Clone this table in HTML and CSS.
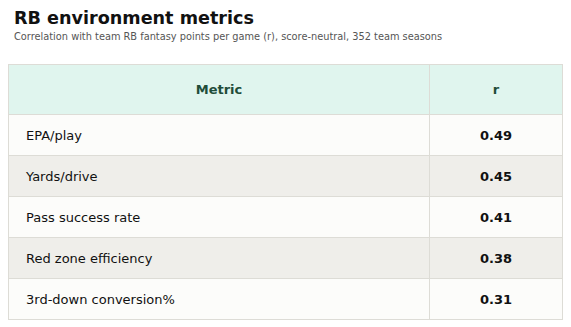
FILE: index.html
```html
<!DOCTYPE html>
<html>
<head>
<meta charset="utf-8">
<link rel="stylesheet" href="styles.css">
</head>
<body>
<div class="page">
  <h1 class="title">RB environment metrics</h1>
  <p class="subtitle">Correlation with team RB fantasy points per game (r), score-neutral, 352 team seasons</p>
  <table class="metrics">
    <thead>
      <tr><th class="col-metric">Metric</th><th class="col-r">r</th></tr>
    </thead>
    <tbody>
      <tr><td class="name">EPA/play</td><td class="val">0.49</td></tr>
      <tr><td class="name">Yards/drive</td><td class="val">0.45</td></tr>
      <tr><td class="name">Pass success rate</td><td class="val">0.41</td></tr>
      <tr><td class="name">Red zone efficiency</td><td class="val">0.38</td></tr>
      <tr><td class="name">3rd-down conversion%</td><td class="val">0.31</td></tr>
    </tbody>
  </table>
</div>
</body>
</html>
```
FILE: styles.css
```css
html, body {
  margin: 0;
  padding: 0;
  background: #ffffff;
}
body {
  font-family: "DejaVu Sans", sans-serif;
  color: #111;
}
.page {
  padding: 7px 8px 0 8px;
}
.title {
  margin: 0 0 0 6px;
  font-size: 17.6px;
  font-weight: bold;
  line-height: 22px;
  color: #111;
}
.subtitle {
  margin: 1px 0 0 6px;
  font-size: 9.8px;
  line-height: 14px;
  color: #555;
}
.metrics {
  margin-top: 20px;
  width: 555px;
  border-collapse: collapse;
  font-size: 13px;
}
.metrics th, .metrics td {
  border: 1px solid #dddcd6;
  padding: 0;
}
.metrics th {
  height: 49px;
  background: #e0f5ee;
  color: #1f4d3a;
  font-weight: bold;
  text-align: center;
}
.col-r {
  width: 132px;
}
.metrics td {
  height: 40px;
}
.metrics tbody tr:nth-child(odd) td {
  background: #fcfcfa;
}
.metrics tbody tr:nth-child(even) td {
  background: #efeeea;
}
.name {
  padding-left: 17px !important;
  text-align: left;
}
.val {
  text-align: center;
  font-weight: bold;
}
```
